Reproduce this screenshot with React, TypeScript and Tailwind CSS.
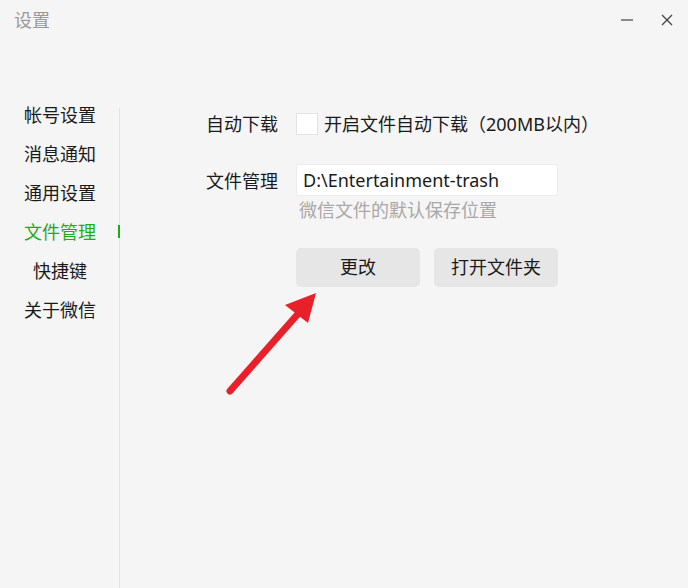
import React from "react";

const menu = ["帐号设置", "消息通知", "通用设置", "文件管理", "快捷键", "关于微信"];

const App = () => {
  const active = "文件管理";

  return (
    <div
      className="relative w-[688px] h-[588px] bg-[#f5f5f5] flex flex-col overflow-hidden"
      style={{ fontFamily: '"Noto Sans", "Noto Sans CJK SC", sans-serif' }}
    >
      {/* title bar */}
      <div className="h-[40px] flex items-center justify-between pl-[14px] pr-[14px]">
        <span className="text-[18px] text-[#9a9a9a] leading-none">设置</span>
        <div className="flex items-center gap-[26px] text-[#555]">
          <svg width="14" height="14" viewBox="0 0 14 14">
            <line x1="1" y1="7" x2="13" y2="7" stroke="#444" strokeWidth="1.2" />
          </svg>
          <svg width="14" height="14" viewBox="0 0 14 14">
            <line x1="2" y1="2" x2="12" y2="12" stroke="#444" strokeWidth="1.2" />
            <line x1="12" y1="2" x2="2" y2="12" stroke="#444" strokeWidth="1.2" />
          </svg>
        </div>
      </div>

      <div className="flex flex-1">
        {/* sidebar */}
        <div className="w-[119px] pl-[24px] pt-[55px] flex flex-col">
          {menu.map((m) => (
            <div key={m} className="h-[39px] w-[72px] flex items-center justify-center">
              <span
                className={
                  "text-[18px] leading-none " +
                  (m === active ? "text-[#1aad19]" : "text-[#1a1a1a]")
                }
              >
                {m}
              </span>
            </div>
          ))}
        </div>
        <div className="relative w-px mt-[68px] bg-[#e3e3e3]">
          <div className="absolute left-[-1px] top-[117px] w-[2px] h-[13px] bg-[#1aad19]" />
        </div>

        {/* content */}
        <div className="flex-1 pl-[86px] pt-[73px] text-[18px] text-[#1a1a1a]">
          <div className="flex items-center h-[22px]">
            <span className="w-[90px] leading-none">自动下载</span>
            <div className="w-[22px] h-[22px] bg-white border border-[#e3e3e3] mr-[6px]" />
            <span className="leading-none">开启文件自动下载（200MB以内）</span>
          </div>

          <div className="flex items-start mt-[29px]">
            <span className="w-[90px] leading-none mt-[8px]">文件管理</span>
            <div className="flex flex-col">
              <div className="w-[262px] h-[32px] bg-white border border-[#ececec] flex items-center pl-[6px] text-[18px] leading-none">
                D:\Entertainment-trash
              </div>
              <span className="mt-[5px] ml-[3px] text-[#a8a8a8] leading-none">微信文件的默认保存位置</span>
              <div className="flex gap-[14px] mt-[29px]">
                <button className="w-[124px] h-[39px] rounded-[5px] bg-[#e6e6e6] text-[18px] text-[#1a1a1a]">
                  更改
                </button>
                <button className="w-[124px] h-[39px] rounded-[5px] bg-[#e6e6e6] text-[18px] text-[#1a1a1a]">
                  打开文件夹
                </button>
              </div>
            </div>
          </div>
        </div>
      </div>

      {/* red arrow annotation */}
      <svg className="absolute left-0 top-0 pointer-events-none" width="688" height="588">
        <line x1="230" y1="391" x2="297" y2="315" stroke="#e8202a" strokeWidth="7" strokeLinecap="round" />
        <polygon points="316,293 285,305 308,323" fill="#e8202a" />
      </svg>
    </div>
  );
};

export default App;
